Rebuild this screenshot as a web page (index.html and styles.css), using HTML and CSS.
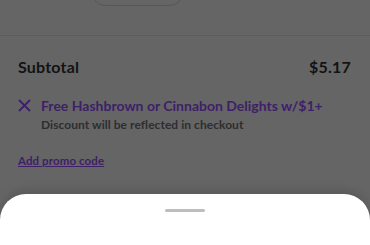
FILE: index.html
```html
<!DOCTYPE html>
<html>
<head>
<meta charset="utf-8">
<link rel="stylesheet" href="styles.css">
</head>
<body>
<div class="page">
  <div class="top">
    <div class="pill-btn"></div>
  </div>
  <div class="summary">
    <div class="row subtotal">
      <span>Subtotal</span>
      <span>$5.17</span>
    </div>
    <div class="promo">
      <svg class="x" width="13" height="13" viewBox="0 0 13 13"><path d="M1 1 L12 12 M12 1 L1 12" stroke="currentColor" stroke-width="1.8" fill="none"/></svg>
      <div class="promo-text">
        <div class="promo-title">Free Hashbrown or Cinnabon Delights w/$1+</div>
        <div class="promo-sub">Discount will be reflected in checkout</div>
      </div>
    </div>
    <a class="add-promo">Add promo code</a>
  </div>
</div>
<div class="sheet">
  <div class="handle"></div>
</div>
</body>
</html>
```
FILE: styles.css
```css
html, body {
  margin: 0;
  padding: 0;
}
body {
  width: 370px;
  height: 245px;
  overflow: hidden;
  background: #656565;
  font-family: Lato, "Liberation Sans", sans-serif;
  position: relative;
}
.page {
  display: flex;
  flex-direction: column;
}
.top {
  height: 36px;
  border-bottom: 1px solid #5c5c5c;
  box-sizing: border-box;
  padding-left: 92px;
}
.pill-btn {
  width: 91px;
  height: 26px;
  margin-top: -20px;
  border: 1.5px solid #575757;
  border-radius: 14px;
  box-sizing: border-box;
}
.summary {
  padding: 0 19px 0 18px;
  display: flex;
  flex-direction: column;
}
.row {
  display: flex;
  justify-content: space-between;
  align-items: center;
}
.subtotal {
  margin-top: 21px;
  font-size: 16px;
  font-weight: 700;
  color: #131313;
  line-height: 20px;
  letter-spacing: 0.2px;
}
.promo {
  display: flex;
  align-items: flex-start;
  margin-top: 19px;
  color: #3e1f68;
}
.x {
  margin-top: 3px;
  margin-right: 10px;
  flex: none;
}
.promo-title {
  font-size: 14px;
  font-weight: 700;
  line-height: 19px;
  color: #3e1f68;
  white-space: nowrap;
}
.promo-sub {
  font-size: 12px;
  font-weight: 700;
  line-height: 16px;
  color: #2e2e2e;
  margin-top: 2px;
  letter-spacing: 0.05px;
}
.add-promo {
  margin-top: 20px;
  font-size: 11.5px;
  font-weight: 700;
  color: #3e1f68;
  text-decoration: underline;
  line-height: 16px;
  align-self: flex-start;
  letter-spacing: 0.1px;
}
.sheet {
  position: absolute;
  left: 0;
  right: 0;
  top: 194px;
  bottom: 0;
  background: #fff;
  border-radius: 26px 26px 0 0;
  box-shadow: 0 -4px 8px rgba(0,0,0,0.12);
  display: flex;
  justify-content: center;
}
.handle {
  width: 40px;
  height: 3px;
  background: #bdbdbd;
  border-radius: 2px;
  margin-top: 15px;
}
```
